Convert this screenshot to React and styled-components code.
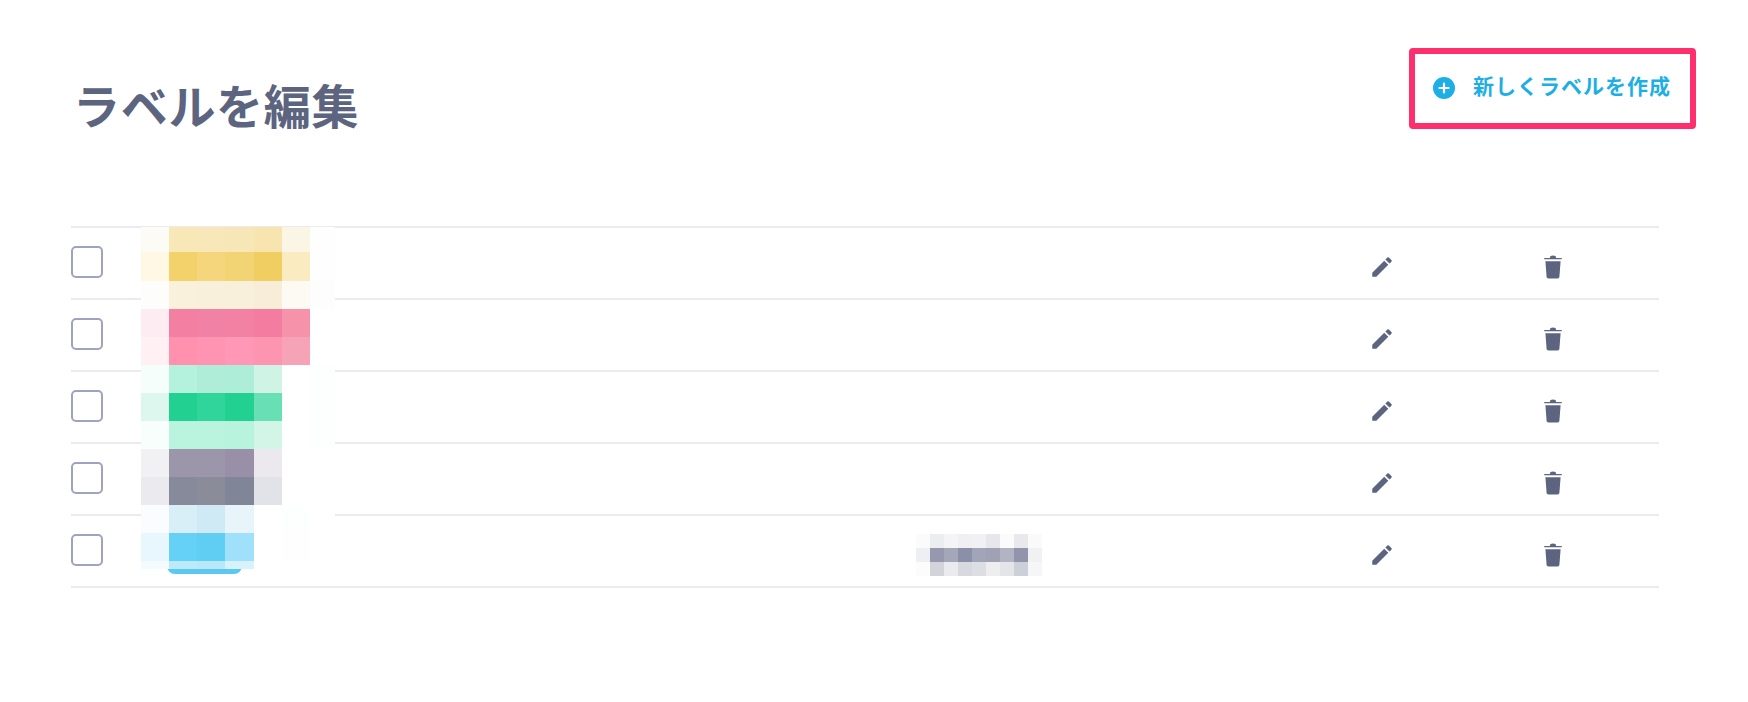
import React from 'react';
import styled, { createGlobalStyle } from 'styled-components';
import { MdEdit } from 'react-icons/md';

const labels = [
  { id: 1, color: '#f4d26b' },
  { id: 2, color: '#ff8fae' },
  { id: 3, color: '#22d092' },
  { id: 4, color: '#878a9b' },
  { id: 5, color: '#5ac8f0', hasCount: true },
];

const nameMosaic = {
  columns: [28, 28, 28, 29, 28, 28, 25],
  rows: [25, 29, 28, 28, 28, 28, 28, 28, 28, 28, 28, 28, 8],
  cells: [
    ['#fcfbf6', '#f8e8b8', '#f8e8b9', '#f7e7b8', '#f7e4ae', '#fbf5e5', '#fefefe'],
    ['#fef8e5', '#f4d26b', '#f5d67c', '#f2d474', '#f1ce62', '#faecc0', '#fefefe'],
    ['#fdfdfb', '#f9f1dc', '#f9f0dc', '#f9f0dc', '#f8edd9', '#fcfaf3', '#fdfdfd'],
    ['#fdecf2', '#f37fa2', '#f282a5', '#f281a4', '#f47ca0', '#f792ab', '#ffffff'],
    ['#fff0f4', '#ff90ae', '#ff94b2', '#ff98b7', '#fd94b0', '#f6a3b7', '#ffffff'],
    ['#f6fefb', '#b5f2dd', '#b0edd9', '#aeedd8', '#cff4e6', '#ffffff', '#fdfefe'],
    ['#ddf7ee', '#22d092', '#2fd59b', '#22d092', '#68dfb5', '#ffffff', '#fdfefe'],
    ['#f8fefc', '#bbf4de', '#bbf4de', '#b8f3de', '#d2f5e8', '#ffffff', '#fdfefe'],
    ['#f1f0f3', '#9c96ab', '#9c96ab', '#998fa8', '#ebe9ee', '#ffffff', '#ffffff'],
    ['#ebebef', '#878a9b', '#8b8c99', '#808598', '#e1e3e8', '#ffffff', '#ffffff'],
    ['#fbfcff', '#d8eff8', '#cfeaf5', '#e7f4fa', '#ffffff', '#fdfefe', '#ffffff'],
    ['#e8f7fe', '#66d1f7', '#60cdf3', '#9fe1fa', '#ffffff', '#fefefe', '#ffffff'],
    ['#f3fbfe', '#bdeaf9', '#b9e8f9', '#d8f2fc', '#ffffff', '#ffffff', '#ffffff'],
  ],
};

const countMosaic = {
  columns: [14, 14, 14, 14, 14, 14, 14, 14, 14],
  rows: [14, 14, 14],
  cells: [
    ['#fbfbfb', '#ecedf1', '#f4f4f6', '#f0f0f3', '#f0f1f4', '#e6e6eb', '#fbfbfb', '#e8e8ed', '#fafafa'],
    ['#eeeff3', '#9698ad', '#a4a7b7', '#8b90a8', '#a2a5b7', '#9fa2b4', '#b2b4c4', '#9194ab', '#f1f1f4'],
    ['#fcfcfc', '#d3d4da', '#ebebef', '#d8d9df', '#dddee3', '#eeeef0', '#e4e5e9', '#ccd0d9', '#f6f6f8'],
  ],
};

const PlusIcon = () => (
  <svg width="22" height="22" viewBox="0 0 22 22">
    <circle cx="11" cy="11" r="11" fill="#1eaee6" />
    <path d="M11 6.5v9M6.5 11h9" stroke="#fff" strokeWidth="2.2" strokeLinecap="round" />
  </svg>
);

const TrashIcon = () => (
  <svg width="18" height="24" viewBox="0 0 18 24">
    <path d="M6 2.4C6 1.3 7 .6 9 .6s3 .7 3 1.8v.5h5.2c.5 0 .8.3.8.7s-.3.7-.8.7H.8C.3 4.3 0 4 0 3.6s.3-.7.8-.7H6z" fill="#5c6480" />
    <path d="M1.4 6.2h15.2l-1.2 15.6c-.1 1-.8 1.7-1.8 1.7H4.4c-1 0-1.7-.7-1.8-1.7z" fill="#5c6480" />
  </svg>
);

const Mosaic = ({ data, className }) => (
  <MosaicGrid className={className} $columns={data.columns} $rows={data.rows}>
    {data.cells.flat().map((color, i) => (
      <MosaicCell key={i} $color={color} />
    ))}
  </MosaicGrid>
);

const App = () => (
  <Page>
    <GlobalStyle />
    <Header>
      <Title>ラベルを編集</Title>
      <CreateButton type="button">
        <PlusIcon />
        <ButtonLabel>新しくラベルを作成</ButtonLabel>
      </CreateButton>
    </Header>
    <Table>
      {labels.map(label => (
        <Row key={label.id}>
          <Checkbox type="checkbox" />
          <Pill $color={label.color} />
          <CountCell>{label.hasCount && <Mosaic data={countMosaic} />}</CountCell>
          <IconCell><MdEdit size={26} /></IconCell>
          <IconCell><TrashIcon /></IconCell>
        </Row>
      ))}
      <NameMosaic data={nameMosaic} />
    </Table>
  </Page>
);

const GlobalStyle = createGlobalStyle`
  body {
    margin: 0;
    background: #fff;
    font-family: "Noto Sans CJK JP", "Noto Sans", sans-serif;
  }
`;

const Page = styled.div`
  padding: 48px 52px 0 71px;
`;

const Header = styled.header`
  display: flex;
  justify-content: space-between;
  align-items: flex-start;
  height: 178px;
`;

const Title = styled.h1`
  margin: 24px 0 0 2px;
  font-size: 47px;
  line-height: 64px;
  font-weight: 700;
  letter-spacing: 0.7px;
  color: #5c6480;
`;

const CreateButton = styled.button`
  display: flex;
  align-items: center;
  gap: 18px;
  box-sizing: border-box;
  width: 287px;
  height: 81px;
  padding: 0 18px 2px;
  border: 6px solid #ff2f6d;
  border-radius: 4px;
  background: #fff;
  font: 700 21px/1 "Noto Sans CJK JP", sans-serif;
  letter-spacing: 1px;
  color: #1eaee6;
`;

const ButtonLabel = styled.span`
  padding-bottom: 5px;
`;

const Table = styled.div`
  position: relative;
  margin-right: 37px;
  border-top: 2px solid #e9ebf0;
`;

const Row = styled.div`
  display: grid;
  grid-template-columns: 70px 775px 453px 175px 1fr;
  align-items: center;
  height: 70px;
  border-bottom: 2px solid #e9ebf0;
`;

const Checkbox = styled.input`
  appearance: none;
  box-sizing: border-box;
  width: 32px;
  height: 32px;
  margin: -2px 0 0;
  border: 2px solid #a0a3bd;
  border-radius: 5px;
  background: #fff;
`;

const Pill = styled.div`
  width: 75px;
  height: 46px;
  margin: 0 0 0 26px;
  border-radius: 8px;
  background: ${props => props.$color};
`;

const CountCell = styled.div`
  padding-top: 8px;
`;

const IconCell = styled.div`
  display: flex;
  align-items: center;
  height: 24px;
  margin-top: 7px;
  color: #5c6480;
`;

const MosaicGrid = styled.div`
  display: grid;
  width: max-content;
  grid-template-columns: ${props => props.$columns.map(w => `${w}px`).join(' ')};
  grid-template-rows: ${props => props.$rows.map(h => `${h}px`).join(' ')};
`;

const MosaicCell = styled.div`
  background: ${props => props.$color};
`;

const NameMosaic = styled(Mosaic)`
  position: absolute;
  top: -1px;
  left: 70px;
`;

export default App;
